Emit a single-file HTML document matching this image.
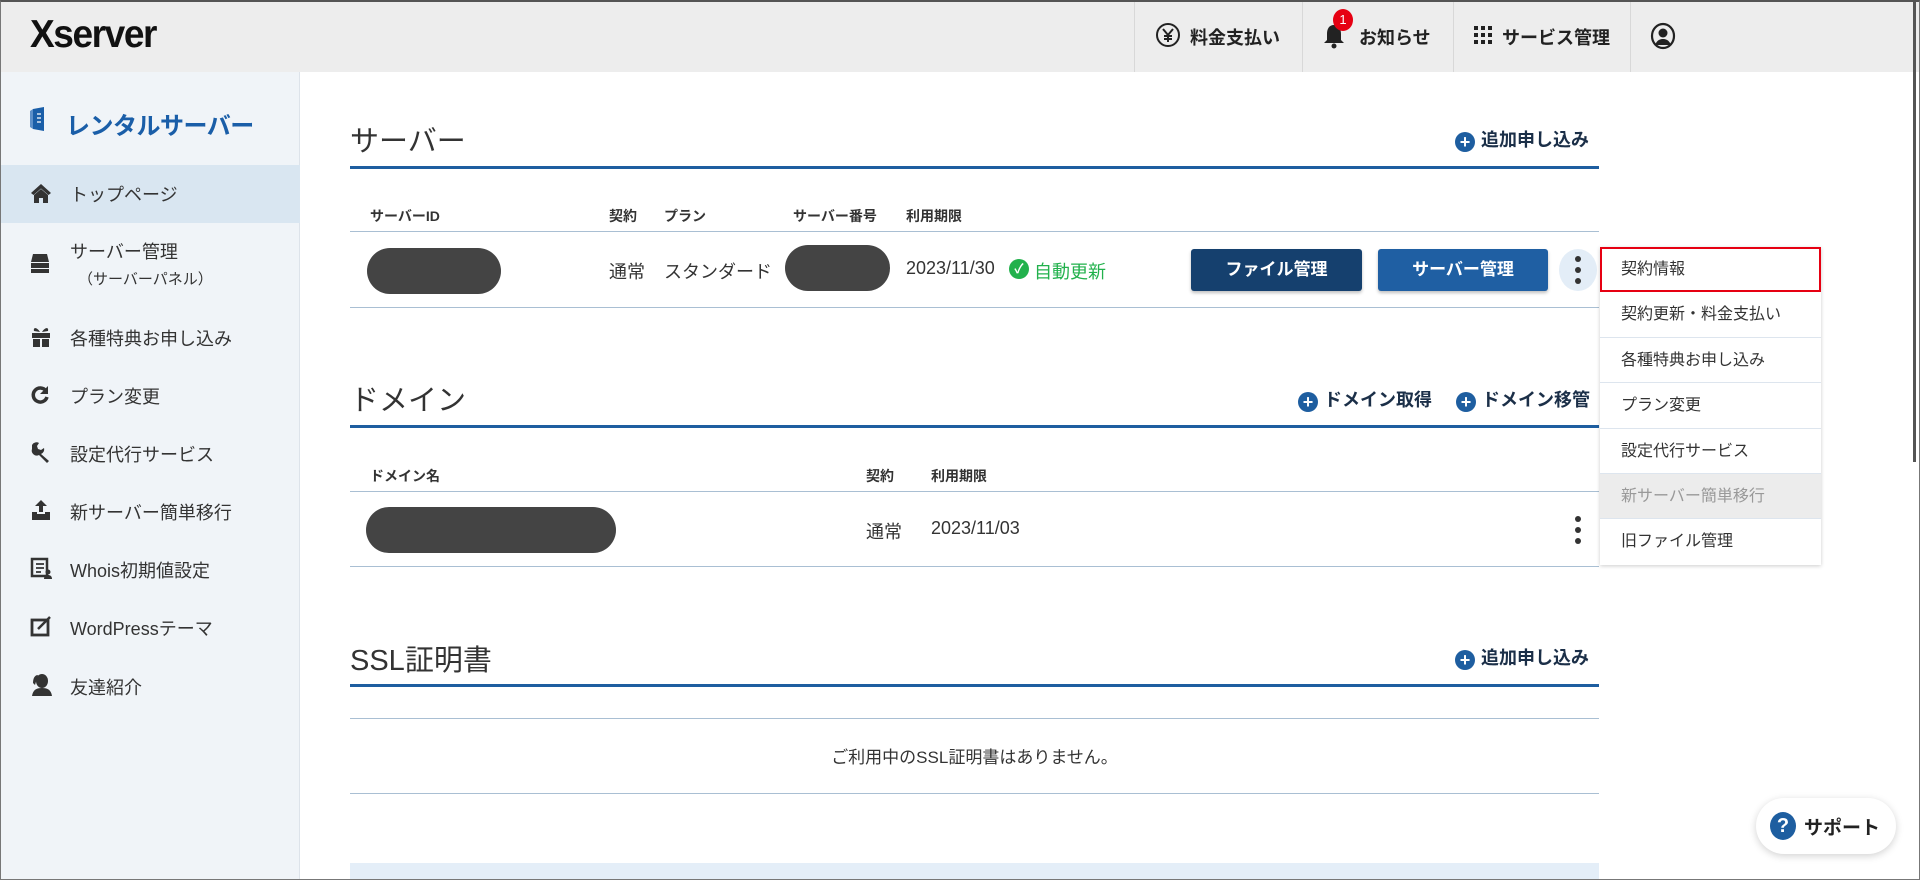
<!DOCTYPE html>
<html><head><meta charset="utf-8"><style>
*{margin:0;padding:0;box-sizing:border-box}
body{width:1920px;height:880px;overflow:hidden;position:relative;background:#fff;font-family:"Liberation Sans","Noto Sans CJK JP",sans-serif;color:#333}
.a{position:absolute;white-space:nowrap}
.frame{position:absolute;left:0;top:0;width:1920px;height:880px;border:1px solid #777;border-top:2px solid #555;pointer-events:none;z-index:50}
.hdr{position:absolute;left:0;top:0;width:1920px;height:72px;background:#ededed}
.sep{position:absolute;top:0;width:1px;height:72px;background:#d8d8d8}
.hn{font-weight:bold;font-size:18px;color:#222;top:24px}
.side{position:absolute;left:0;top:72px;width:300px;height:808px;background:#f0f4f8;border-right:1px solid #dde3ea}
.mi{font-size:18px;color:#333;left:70px}
.ic{position:absolute;left:30px}
.h2{font-size:29px;color:#333;left:350px}
.bl{position:absolute;left:350px;width:1249px;height:3px;background:#1e5ea0}
.ln{position:absolute;left:350px;width:1249px;height:1px;background:#a9bfd3}
.th{font-size:14px;font-weight:bold;color:#333}
.td{font-size:18px;color:#333}
.link{font-size:18px;font-weight:bold;color:#1b2f48}
.plus{display:inline-block;width:20px;height:20px;border-radius:50%;background:#1e5ea0;color:#fff;font-size:18px;line-height:20px;text-align:center;vertical-align:-2px;margin-right:6px;font-weight:bold}
.blob{position:absolute;background:#444;border-radius:24px}
.btn{position:absolute;top:249px;height:42px;width:171px;color:#fff;font-weight:bold;font-size:17px;text-align:center;line-height:42px;border-radius:3px;box-shadow:0 2px 3px rgba(0,0,0,.25)}
.dd{position:absolute;left:1600px;top:247px;width:221px;background:#fff;box-shadow:0 1px 4px rgba(0,0,0,.2);z-index:5}
.dd div{height:45.4px;line-height:45px;padding-left:21px;font-size:16px;color:#333;border-bottom:1px solid #dde5ee}
.dot{position:absolute;width:6px;height:6px;border-radius:50%;background:#333}
</style></head><body>
<div class="hdr"></div>
<div class="a" style="left:30px;top:13px;font-size:39px;font-weight:bold;color:#111;letter-spacing:-1.5px;transform:scaleX(0.95);transform-origin:left">Xserver</div>
<div class="sep" style="left:1134px"></div><div class="sep" style="left:1302px"></div><div class="sep" style="left:1453px"></div><div class="sep" style="left:1630px"></div>
<svg class="a" style="left:1155px;top:22px" width="26" height="26" viewBox="0 0 26 26"><circle cx="13" cy="13" r="11" fill="none" stroke="#222" stroke-width="2"/><path d="M8 7l5 6 5-6M13 13v7M9 14h8M9 17h8" stroke="#222" stroke-width="2" fill="none"/></svg>
<div class="a hn" style="left:1190px">料金支払い</div>
<svg class="a" style="left:1322px;top:22px" width="24" height="28" viewBox="0 0 24 28"><path d="M12 3c-5 0-7 4-7 9v6l-3 3h20l-3-3v-6c0-5-2-9-7-9z" fill="#222"/><circle cx="12" cy="24" r="2.5" fill="#222"/></svg>
<div class="a" style="left:1333px;top:9px;width:20px;height:22px;border-radius:50%;background:#e60012;color:#fff;font-size:13px;text-align:center;line-height:22px">1</div>
<div class="a hn" style="left:1359px">お知らせ</div>
<svg class="a" style="left:1474px;top:26px" width="20" height="20" viewBox="0 0 20 20" fill="#222"><rect x="0" y="0" width="4" height="4"/><rect x="7" y="0" width="4" height="4"/><rect x="14" y="0" width="4" height="4"/><rect x="0" y="7" width="4" height="4"/><rect x="7" y="7" width="4" height="4"/><rect x="14" y="7" width="4" height="4"/><rect x="0" y="14" width="4" height="4"/><rect x="7" y="14" width="4" height="4"/><rect x="14" y="14" width="4" height="4"/></svg>
<div class="a hn" style="left:1502px">サービス管理</div>
<svg class="a" style="left:1650px;top:22px" width="26" height="28" viewBox="0 0 26 28"><ellipse cx="13" cy="14" rx="11" ry="12" fill="none" stroke="#222" stroke-width="2.2"/><circle cx="13" cy="11" r="4.5" fill="#222"/><path d="M5 23c2-5 5-6 8-6s6 1 8 6" fill="#222"/></svg>
<div class="a" style="left:1913px;top:0;width:3px;height:462px;background:#555;z-index:60"></div>

<div class="side"></div>
<svg class="a" style="left:29px;top:106px" width="18" height="26" viewBox="0 0 18 26"><path d="M4 3l11-2v24l-11-2z" fill="#1a5ea8"/><path d="M4 3L1 5v16l3 2z" fill="#5d8fc8"/><path d="M8 8h4M8 12h4M8 16h4" stroke="#fff" stroke-width="1.3"/></svg>
<div class="a" style="left:66px;top:106px;font-size:24px;font-weight:bold;color:#1a5ea8;letter-spacing:-0.5px">レンタルサーバー</div>
<div class="a" style="left:0;top:165px;width:300px;height:58px;background:#d9e6f1"></div>
<svg class="ic" style="top:182px" width="22" height="22" viewBox="0 0 22 22"><path d="M11 2L1 11l2.5 2L11 6.5l7.5 6.5 2.5-2z" fill="#333"/><path d="M4 13l7-6 7 6v8h-5v-5h-4v5H4z" fill="#333"/></svg>
<div class="a mi" style="top:181px">トップページ</div>
<svg class="ic" style="top:252px" width="20" height="22" viewBox="0 0 20 22"><path d="M3 2h14l2 8H1z" fill="#333"/><rect x="1" y="11" width="18" height="5" fill="#333"/><rect x="1" y="17" width="18" height="4" fill="#333"/></svg>
<div class="a mi" style="top:238px">サーバー管理</div>
<div class="a" style="left:78px;top:268px;font-size:15px;color:#333">（サーバーパネル）</div>
<svg class="ic" style="top:326px" width="22" height="22" viewBox="0 0 22 22" fill="#333"><rect x="2" y="7" width="18" height="5"/><rect x="3" y="13" width="7" height="8"/><rect x="12" y="13" width="7" height="8"/><path d="M10 6C7 1 3 1 4 5zM12 6c3-5 7-5 6-1z"/></svg>
<div class="a mi" style="top:325px">各種特典お申し込み</div>
<svg class="ic" style="top:385px" width="20" height="20" viewBox="0 0 20 20"><path d="M16 6A7 7 0 1 0 17 12" fill="none" stroke="#333" stroke-width="3.5"/><path d="M18 1v8h-8z" fill="#333"/></svg>
<div class="a mi" style="top:383px">プラン変更</div>
<svg class="ic" style="top:441px" width="22" height="22" viewBox="0 0 22 22"><path d="M2 4a5 5 0 0 1 7-2L7 5l1 3 3 1 3-2a5 5 0 0 1-3 6l8 7-2 2-8-8a5 5 0 0 1-7-6z" fill="#333"/></svg>
<div class="a mi" style="top:441px">設定代行サービス</div>
<svg class="ic" style="top:499px" width="22" height="22" viewBox="0 0 22 22" fill="#333"><path d="M11 1l6 6h-4v6H9V7H5z"/><path d="M2 13h5v2h8v-2h5v8H2z"/></svg>
<div class="a mi" style="top:499px">新サーバー簡単移行</div>
<svg class="ic" style="top:557px" width="22" height="22" viewBox="0 0 22 22"><rect x="2" y="2" width="15" height="17" fill="none" stroke="#333" stroke-width="2.5"/><path d="M6 7h8M6 11h8M6 15h5" stroke="#333" stroke-width="1.8"/><circle cx="18" cy="15" r="2.5" fill="#333"/><path d="M14 22c0-3 2-4 4-4s4 1 4 4z" fill="#333"/></svg>
<div class="a mi" style="top:557px">Whois初期値設定</div>
<svg class="ic" style="top:615px" width="22" height="22" viewBox="0 0 22 22"><rect x="2" y="5" width="16" height="15" fill="none" stroke="#333" stroke-width="2.8"/><path d="M8 14l12-12" stroke="#333" stroke-width="2.5"/></svg>
<div class="a mi" style="top:615px">WordPressテーマ</div>
<svg class="ic" style="top:673px" width="24" height="24" viewBox="0 0 24 24" fill="#333"><ellipse cx="12" cy="8" rx="6" ry="7"/><path d="M2 23c1-6 4-8 10-8s9 2 10 8z"/><path d="M3 10c0-5 2-8 5-8L5 12z"/></svg>
<div class="a mi" style="top:674px">友達紹介</div>

<!-- server -->
<div class="a h2" style="top:118px">サーバー</div>
<div class="a link" style="right:331px;top:126px"><span class="plus">+</span>追加申し込み</div>
<div class="bl" style="top:166px"></div>
<div class="a th" style="left:370px;top:206px">サーバーID</div>
<div class="a th" style="left:609px;top:206px">契約</div>
<div class="a th" style="left:664px;top:206px">プラン</div>
<div class="a th" style="left:793px;top:206px">サーバー番号</div>
<div class="a th" style="left:906px;top:206px">利用期限</div>
<div class="ln" style="top:231px"></div>
<div class="blob" style="left:367px;top:248px;width:134px;height:46px;border-radius:23px"></div>
<div class="a td" style="left:609px;top:258px">通常</div>
<div class="a td" style="left:664px;top:258px">スタンダード</div>
<div class="blob" style="left:785px;top:245px;width:105px;height:46px;border-radius:23px"></div>
<div class="a td" style="left:906px;top:258px">2023/11/30</div>
<div class="a" style="left:1009px;top:259px;width:20px;height:20px;border-radius:50%;background:#22b14c;color:#fff;font-size:13px;line-height:20px;text-align:center;font-weight:bold">✓</div>
<div class="a td" style="left:1034px;top:258px;color:#22b14c">自動更新</div>
<div class="btn" style="left:1191px;background:#15406e">ファイル管理</div>
<div class="btn" style="left:1378px;width:170px;background:#1f5fa3">サーバー管理</div>
<div class="a" style="left:1559px;top:249px;width:38px;height:42px;border-radius:50%;background:#e3edf7"></div>
<div class="dot" style="left:1575px;top:256px"></div><div class="dot" style="left:1575px;top:267px"></div><div class="dot" style="left:1575px;top:278px"></div>
<div class="ln" style="top:307px"></div>

<div class="dd">
<div style="outline:2px solid #e60012;outline-offset:-2px;border-bottom:none">契約情報</div>
<div>契約更新・料金支払い</div>
<div>各種特典お申し込み</div>
<div>プラン変更</div>
<div>設定代行サービス</div>
<div style="background:#ececec;color:#999">新サーバー簡単移行</div>
<div style="border-bottom:none">旧ファイル管理</div>
</div>

<!-- domain -->
<div class="a h2" style="top:377px">ドメイン</div>
<div class="a link" style="left:1298px;top:386px"><span class="plus">+</span>ドメイン取得</div>
<div class="a link" style="left:1456px;top:386px"><span class="plus">+</span>ドメイン移管</div>
<div class="bl" style="top:425px"></div>
<div class="a th" style="left:370px;top:466px">ドメイン名</div>
<div class="a th" style="left:866px;top:466px">契約</div>
<div class="a th" style="left:931px;top:466px">利用期限</div>
<div class="ln" style="top:491px"></div>
<div class="blob" style="left:366px;top:507px;width:250px;height:46px;border-radius:23px"></div>
<div class="a td" style="left:866px;top:518px">通常</div>
<div class="a td" style="left:931px;top:518px">2023/11/03</div>
<div class="dot" style="left:1575px;top:516px"></div><div class="dot" style="left:1575px;top:527px"></div><div class="dot" style="left:1575px;top:538px"></div>
<div class="ln" style="top:566px"></div>

<!-- ssl -->
<div class="a h2" style="top:637px">SSL証明書</div>
<div class="a link" style="right:331px;top:644px"><span class="plus">+</span>追加申し込み</div>
<div class="bl" style="top:684px"></div>
<div class="ln" style="top:718px"></div>
<div class="a" style="left:350px;width:1249px;top:743px;text-align:center;font-size:17px;color:#333">ご利用中のSSL証明書はありません。</div>
<div class="ln" style="top:793px"></div>
<div class="a" style="left:350px;top:863px;width:1249px;height:17px;background:#e4eef8"></div>

<div class="a" style="left:1756px;top:798px;width:140px;height:56px;border-radius:28px;background:#fff;box-shadow:0 2px 8px rgba(0,0,0,.18)"></div>
<div class="a" style="left:1770px;top:812px;width:26px;height:28px;border-radius:50%;background:#1e5ea0;color:#fff;font-weight:bold;font-size:20px;text-align:center;line-height:28px">?</div>
<div class="a" style="left:1804px;top:813px;font-size:19px;font-weight:bold;color:#222">サポート</div>
<div class="frame"></div>
</body></html>
